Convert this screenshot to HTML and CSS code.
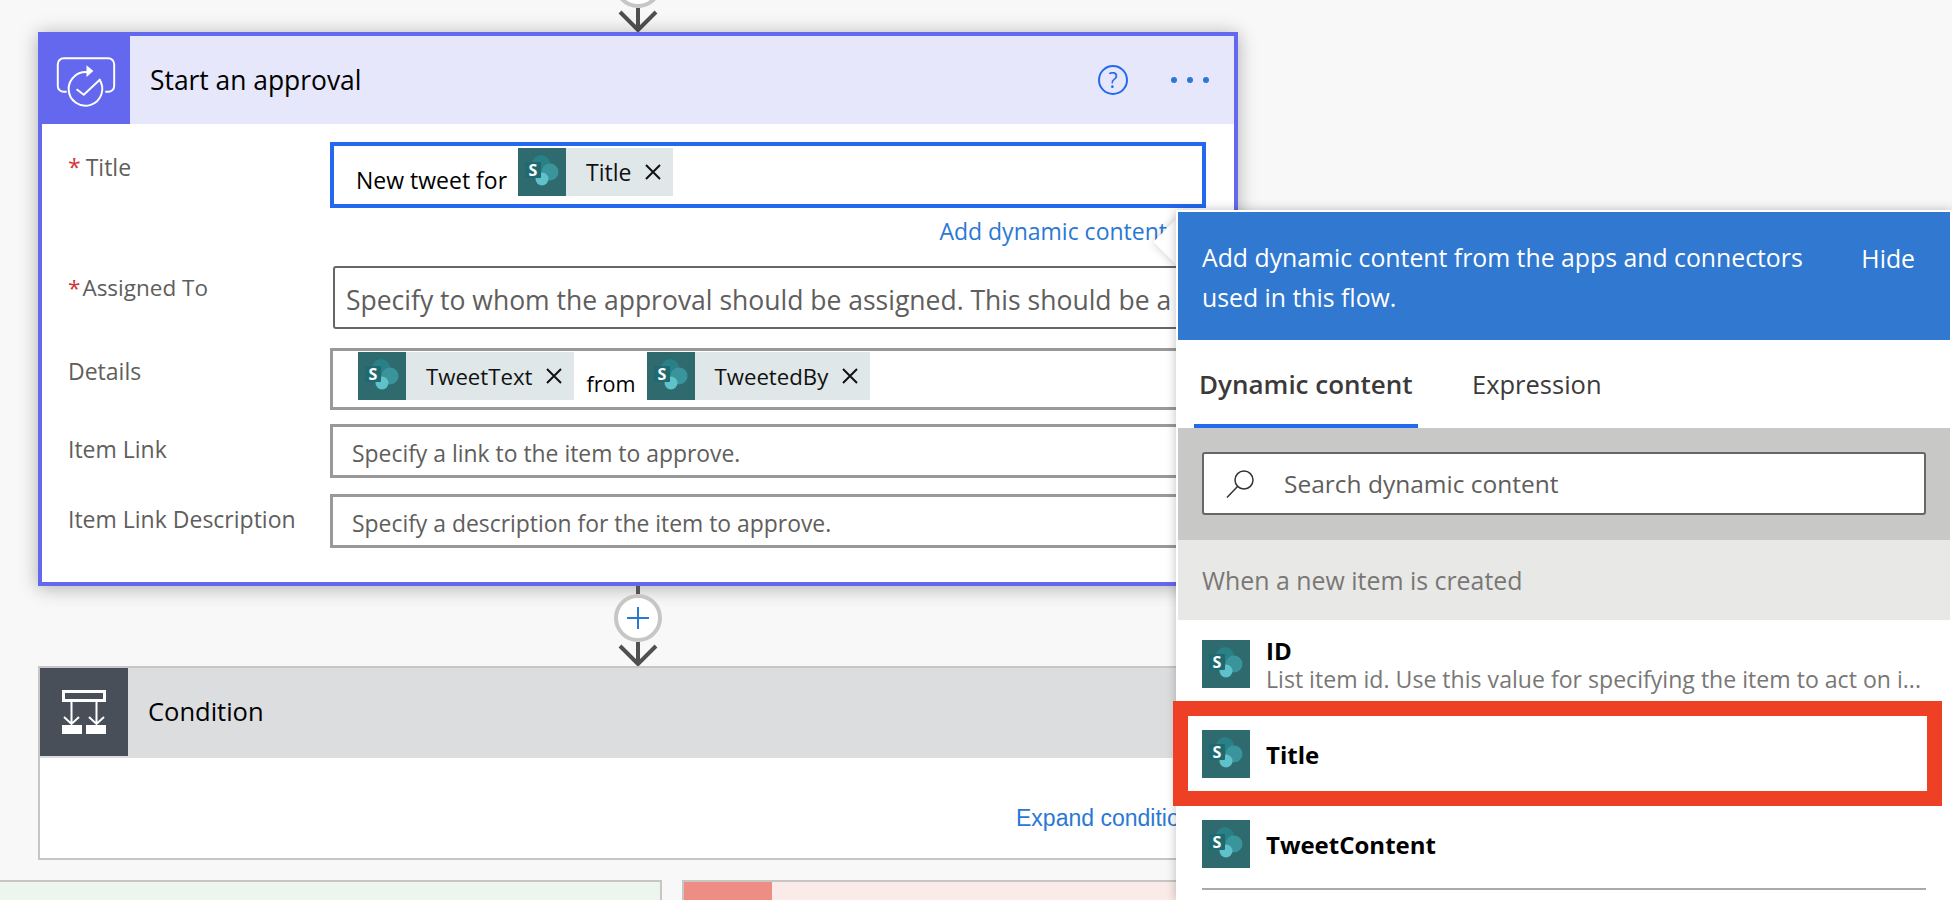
FILE: index.html
```html
<!DOCTYPE html>
<html lang="en">
<head>
    <meta charset="UTF-8">
    <meta name="viewport" content="width=device-width, initial-scale=1.0">
    <title>Start an approval</title>
    <link rel="stylesheet" href="styles.css">
</head>
<body>

<svg class="defs" width="0" height="0">
    <symbol id="sp" viewBox="0 0 48 48">
        <rect width="48" height="48" fill="#2f6a6e"/>
        <circle cx="23" cy="16" r="9" fill="#2a8087"/>
        <circle cx="32" cy="24" r="8.500" fill="#3a949c"/>
        <circle cx="24" cy="31" r="6.500" fill="#5fc1ca"/>
        <rect x="7" y="14" width="16" height="16" rx="1" fill="#1f6a70"/>
    </symbol>
    <symbol id="close" viewBox="0 0 16 16">
        <path d="M1 1l14 14M15 1L1 15" fill="none" stroke="#111" stroke-width="2"/>
    </symbol>
    <symbol id="arrow" viewBox="0 0 40 24">
        <path d="M20 0v21M2 4l18 18L38 4" fill="none" stroke="#505050" stroke-width="4"/>
    </symbol>
</svg>

<div class="canvas">
    <div class="flow">

        <div class="connector connector-top">
            <div class="connector-line"></div>
            <div class="connector-add"></div>
            <svg class="connector-arrow"><use href="#arrow"/></svg>
        </div>

        <div class="card card-approval">
            <div class="card-head">
                <div class="card-icon">
                    <svg width="92" height="92" viewBox="0 0 92 92" fill="none" stroke="#fff" stroke-width="2">
                        <path d="M28 60h-3a6 6 0 0 1-6-6V32a6 6 0 0 1 6-6h45a6 6 0 0 1 6 6v22a6 6 0 0 1-6 6h-3"/>
                        <path d="M51 40.500A17 17 0 1 0 61 47.400"/>
                        <path d="M48 33l7 6-7 6z" fill="#fff" stroke="none"/>
                        <path d="M38 57.300l7.300 5.700L62 47.300"/>
                    </svg>
                </div>
                <div class="card-title">Start an approval</div>
                <div class="card-actions">
                    <div class="help">?</div>
                    <div class="dots"><span></span><span></span><span></span></div>
                </div>
            </div>

            <div class="card-body">
                <div class="row">
                    <div class="label"><span class="req req-title">*</span>Title</div>
                    <div class="field field-focus">
                        <span class="field-text">New tweet for</span>
                        <div class="chip">
                            <svg class="sp-icon" viewBox="0 0 48 48"><use href="#sp"/><text x="15" y="28" class="sp-letter">S</text></svg>
                            <span class="chip-text chip-text-title">Title</span>
                            <svg class="chip-x"><use href="#close"/></svg>
                        </div>
                    </div>
                </div>
                <div class="add-link">Add dynamic content</div>

                <div class="row">
                    <div class="label label-assigned"><span class="req">*</span>Assigned To</div>
                    <div class="field field-people">Specify to whom the approval should be assigned. This should be a</div>
                </div>

                <div class="row row-details">
                    <div class="label label-details">Details</div>
                    <div class="field field-details">
                        <div class="chip">
                            <svg class="sp-icon" viewBox="0 0 48 48"><use href="#sp"/><text x="15" y="28" class="sp-letter">S</text></svg>
                            <span class="chip-text">TweetText</span>
                            <svg class="chip-x"><use href="#close"/></svg>
                        </div>
                        <span class="field-text field-from">from</span>
                        <div class="chip">
                            <svg class="sp-icon" viewBox="0 0 48 48"><use href="#sp"/><text x="15" y="28" class="sp-letter">S</text></svg>
                            <span class="chip-text">TweetedBy</span>
                            <svg class="chip-x"><use href="#close"/></svg>
                        </div>
                    </div>
                </div>

                <div class="row row-link">
                    <div class="label label-link">Item Link</div>
                    <div class="field field-plain">Specify a link to the item to approve.</div>
                </div>

                <div class="row row-desc">
                    <div class="label label-link">Item Link Description</div>
                    <div class="field field-plain">Specify a description for the item to approve.</div>
                </div>
            </div>
        </div>

        <div class="connector">
            <div class="connector-line"></div>
            <div class="connector-add">
                <svg width="22" height="22" viewBox="0 0 22 22"><path d="M11 0v22M0 11h22" stroke="#2b78d4" stroke-width="2"/></svg>
            </div>
            <svg class="connector-arrow"><use href="#arrow"/></svg>
        </div>

        <div class="card card-condition">
            <div class="card-head">
                <div class="card-icon">
                    <svg width="88" height="88" viewBox="0 0 88 88" fill="none" stroke="#fff" stroke-width="2">
                        <rect x="23.500" y="23.500" width="41" height="9" stroke-width="3"/>
                        <path d="M31.500 33v22M24 49l7.500 7 7.500-7M56.500 33v22M49 49l7.500 7 7.500-7"/>
                        <path d="M22 57h20v9H22zM46 57h20v9H46z" fill="#fff" stroke="none"/>
                    </svg>
                </div>
                <div class="card-title">Condition</div>
            </div>
            <div class="expand">Expand condition</div>
        </div>

        <div class="branches">
            <div class="branch branch-yes"></div>
            <div class="branch branch-no"><div class="branch-icon"></div></div>
        </div>
    </div>

    <div class="beak"></div>

    <div class="panel">
        <div class="panel-head">
            <div class="panel-msg">Add dynamic content from the apps and connectors used in this flow.</div>
            <div class="panel-hide">Hide</div>
        </div>
        <div class="tabs">
            <div class="tab tab-active">Dynamic content</div>
            <div class="tab">Expression</div>
        </div>
        <div class="search-wrap">
            <div class="search">
                <svg width="28" height="28" viewBox="0 0 28 28" fill="none" stroke="#333" stroke-width="1.500">
                    <ellipse cx="18" cy="10" rx="9" ry="9"/>
                    <path d="M11.500 16.500L1 27.500"/>
                </svg>
                <span class="search-text">Search dynamic content</span>
            </div>
        </div>
        <div class="group">When a new item is created</div>

        <div class="item">
            <svg class="sp-icon" viewBox="0 0 48 48"><use href="#sp"/><text x="15" y="28" class="sp-letter">S</text></svg>
            <div class="item-text item-text-double">
                <div class="item-name">ID</div>
                <div class="item-desc">List item id. Use this value for specifying the item to act on i...</div>
            </div>
        </div>
        <div class="item">
            <svg class="sp-icon" viewBox="0 0 48 48"><use href="#sp"/><text x="15" y="28" class="sp-letter">S</text></svg>
            <div class="item-text"><div class="item-name item-name-single">Title</div></div>
        </div>
        <div class="item">
            <svg class="sp-icon" viewBox="0 0 48 48"><use href="#sp"/><text x="15" y="28" class="sp-letter">S</text></svg>
            <div class="item-text"><div class="item-name item-name-single">TweetContent</div></div>
        </div>
        <div class="list-end"></div>
    </div>

    <div class="callout"></div>
</div>

</body>
</html>
```

FILE: styles.css
```css
body {
    margin: 0;
    padding: 0;
    font-family: "Open Sans", "Noto Sans", sans-serif;
    background-color: #f8f8f8;
}

.defs {
    position: absolute;
}

.sp-letter {
    font-family: "Open Sans", sans-serif;
    font-size: 16px;
    font-weight: 700;
    fill: #fff;
    text-anchor: middle;
}

.canvas {
    position: relative;
    width: 1952px;
    height: 900px;
    overflow: hidden;
    background-color: #f8f8f8;
}

.flow {
    display: flex;
    flex-direction: column;
    width: 1200px;
    margin-left: 38px;
}

/* connectors between the cards */
.connector {
    display: flex;
    flex-direction: column;
    align-items: center;
    height: 80px;
}

.connector-top {
    margin-top: -48px;
}

.connector-line {
    width: 4px;
    height: 8px;
    background-color: #555;
}

.connector-add {
    display: flex;
    align-items: center;
    justify-content: center;
    box-sizing: border-box;
    width: 48px;
    height: 48px;
    border: 4px solid #c8c6c4;
    border-radius: 50%;
    background-color: #fff;
}

.connector-arrow {
    width: 40px;
    height: 24px;
}

/* cards */
.card {
    box-sizing: border-box;
    width: 1200px;
    background-color: #fff;
}

.card-approval {
    height: 554px;
    border: 4px solid #6468ef;
    box-shadow: 0 2px 18px rgba(0, 0, 0, 0.3);
}

.card-condition {
    height: 194px;
    border: 2px solid #c8c6c4;
}

.card-head {
    display: flex;
    align-items: center;
}

.card-approval .card-head {
    height: 88px;
    background-color: #e6e7fa;
}

.card-condition .card-head {
    height: 90px;
    background-color: #dcdddf;
    align-items: flex-start;
}

.card-icon {
    flex: none;
    display: flex;
}

.card-approval .card-icon {
    width: 88px;
    height: 88px;
    background-color: #6468ef;
}

.card-approval .card-icon svg {
    margin: -4px 0 0 -3px;
}

.card-condition .card-icon {
    width: 88px;
    height: 88px;
    background-color: #484f58;
}

.card-title {
    flex: 1;
    color: #000;
}

.card-approval .card-title {
    margin-left: 20px;
    font-size: 26.400px;
}

.card-condition .card-title {
    margin-left: 20px;
    font-size: 25.500px;
    line-height: 86px;
}

.card-actions {
    display: flex;
    align-items: center;
    margin-right: 25px;
}

.help {
    box-sizing: border-box;
    width: 30px;
    height: 30px;
    border: 2px solid #2468f0;
    border-radius: 50%;
    font-size: 21px;
    line-height: 26px;
    text-align: center;
    color: #2468f0;
}

.dots {
    display: flex;
    gap: 10px;
    margin-left: 43px;
}

.dots span {
    width: 6px;
    height: 6px;
    border-radius: 50%;
    background-color: #2b78d4;
}

.card-body {
    padding: 18px 28px 0 26px;
}

.row {
    display: flex;
}

.label {
    flex: none;
    width: 262px;
    font-size: 23px;
    line-height: 50px;
    color: #605e5c;
}

.label-assigned {
    font-size: 22.500px;
    line-height: 44px;
}

.label-details {
    line-height: 47px;
}

.label-link {
    line-height: 50px;
}

.req {
    color: #d13438;
    margin-right: 2px;
}

.req-title {
    margin-right: 5px;
}

.field {
    box-sizing: border-box;
    flex: 1;
    min-width: 0;
    white-space: nowrap;
    overflow: hidden;
}

.field-focus {
    display: flex;
    align-items: flex-end;
    height: 66px;
    padding: 2px 0 8px 22px;
    border: 4px solid #2468f0;
}

.field-text {
    font-size: 23px;
    line-height: 32px;
    color: #000;
    margin-right: 11px;
}

.field-people {
    height: 63px;
    margin-left: 3px;
    padding-left: 11px;
    border: 2px solid #666;
    border-radius: 3px;
    font-size: 26.500px;
    line-height: 64px;
    color: #605e5c;
}

.row-details {
    margin-top: 19px;
}

.field-details {
    display: flex;
    align-items: flex-end;
    height: 62px;
    padding: 1px 0 7px 25px;
    border: 3px solid #999;
}

.field-from {
    font-size: 21.600px;
    line-height: 32px;
    margin: 0 11px 0 12px;
}

.field-plain {
    height: 54px;
    padding-left: 19px;
    border: 3px solid #999;
    font-size: 22.900px;
    line-height: 54px;
    color: #605e5c;
}

.row-link {
    margin-top: 14px;
}

.row-desc {
    margin-top: 16px;
}

.add-link {
    height: 58px;
    padding-right: 39px;
    font-size: 23px;
    line-height: 46px;
    text-align: right;
    color: #2b78d4;
}

.chip {
    flex: none;
    display: flex;
    align-items: center;
    height: 48px;
    padding-right: 12px;
    background-color: #dfe7e8;
}

.sp-icon {
    flex: none;
    width: 48px;
    height: 48px;
}

.chip-text {
    margin: 0 14px 0 20px;
    font-size: 22.200px;
    color: #111;
}

.chip-text-title {
    font-size: 23px;
}

.chip-x {
    width: 16px;
    height: 16px;
}

.expand {
    margin-top: 46px;
    padding-left: 976px;
    font-family: "Liberation Sans", Arial, sans-serif;
    font-size: 23px;
    line-height: 28px;
    color: #2b78d4;
    white-space: nowrap;
}

/* branches under the condition */
.branches {
    display: flex;
    gap: 20px;
    margin: 20px 0 0 -40px;
}

.branch {
    box-sizing: border-box;
    height: 60px;
    border: 2px solid #c8c6c4;
}

.branch-yes {
    flex: none;
    width: 664px;
    background-color: #edf6ee;
}

.branch-no {
    flex: none;
    width: 600px;
    background-color: #faeae8;
}

.branch-icon {
    width: 88px;
    height: 60px;
    background-color: #ee8d84;
}

/* dynamic content flyout, sits over the card */
.beak {
    position: absolute;
    left: 1160px;
    top: 226px;
    width: 32px;
    height: 32px;
    background-color: #fff;
    transform: rotate(45deg);
    box-shadow: 0 0 10px rgba(0, 0, 0, 0.2);
}

.panel {
    position: absolute;
    left: 1176px;
    top: 210px;
    box-sizing: border-box;
    width: 776px;
    height: 690px;
    border: 2px solid #fff;
    background-color: #fff;
    box-shadow: 0 0 10px rgba(0, 0, 0, 0.25);
}

.panel-head {
    display: flex;
    justify-content: space-between;
    box-sizing: border-box;
    height: 128px;
    padding: 25px 35px 0 24px;
    background-color: #3078d0;
    color: #fff;
    font-size: 24.800px;
    line-height: 40px;
}

.panel-msg {
    width: 620px;
}

.panel-hide {
    margin-top: 1px;
}

.tabs {
    display: flex;
    height: 88px;
    padding-left: 16px;
}

.tab {
    box-sizing: border-box;
    height: 88px;
    padding: 24px 5px 0;
    font-size: 25.500px;
    line-height: 40px;
    color: #3b3a39;
}

.tab-active {
    width: 224px;
    margin-right: 49px;
    font-size: 26px;
    font-weight: 600;
    white-space: nowrap;
    border-bottom: 4px solid #2468f0;
}

.search-wrap {
    box-sizing: border-box;
    height: 112px;
    padding: 24px 24px 0;
    background-color: #c8c8c6;
}

.search {
    display: flex;
    align-items: center;
    box-sizing: border-box;
    height: 63px;
    padding-left: 22px;
    border: 2px solid #666;
    border-radius: 3px;
    background-color: #fff;
}

.search-text {
    margin-left: 30px;
    font-size: 24.500px;
    color: #605e5c;
}

.group {
    height: 80px;
    padding-left: 24px;
    background-color: #e8e8e6;
    font-size: 24.900px;
    line-height: 80px;
    color: #797775;
}

.item {
    display: flex;
    gap: 16px;
    box-sizing: border-box;
    height: 90px;
    padding: 20px 24px 0;
}

.item-text-double {
    margin-top: -3px;
    line-height: 28px;
}

.item-name {
    font-size: 24px;
    font-weight: 700;
    color: #000;
}

.item-name-single {
    line-height: 49px;
}

.item-desc {
    font-size: 23.100px;
    color: #797775;
    white-space: nowrap;
}

.list-end {
    height: 2px;
    margin: -2px 24px 0;
    background-color: #aaa;
}

/* red highlight drawn over the Title row */
.callout {
    position: absolute;
    left: 1173px;
    top: 701px;
    box-sizing: border-box;
    width: 769px;
    height: 105px;
    border: 15px solid #ed4025;
}
```
